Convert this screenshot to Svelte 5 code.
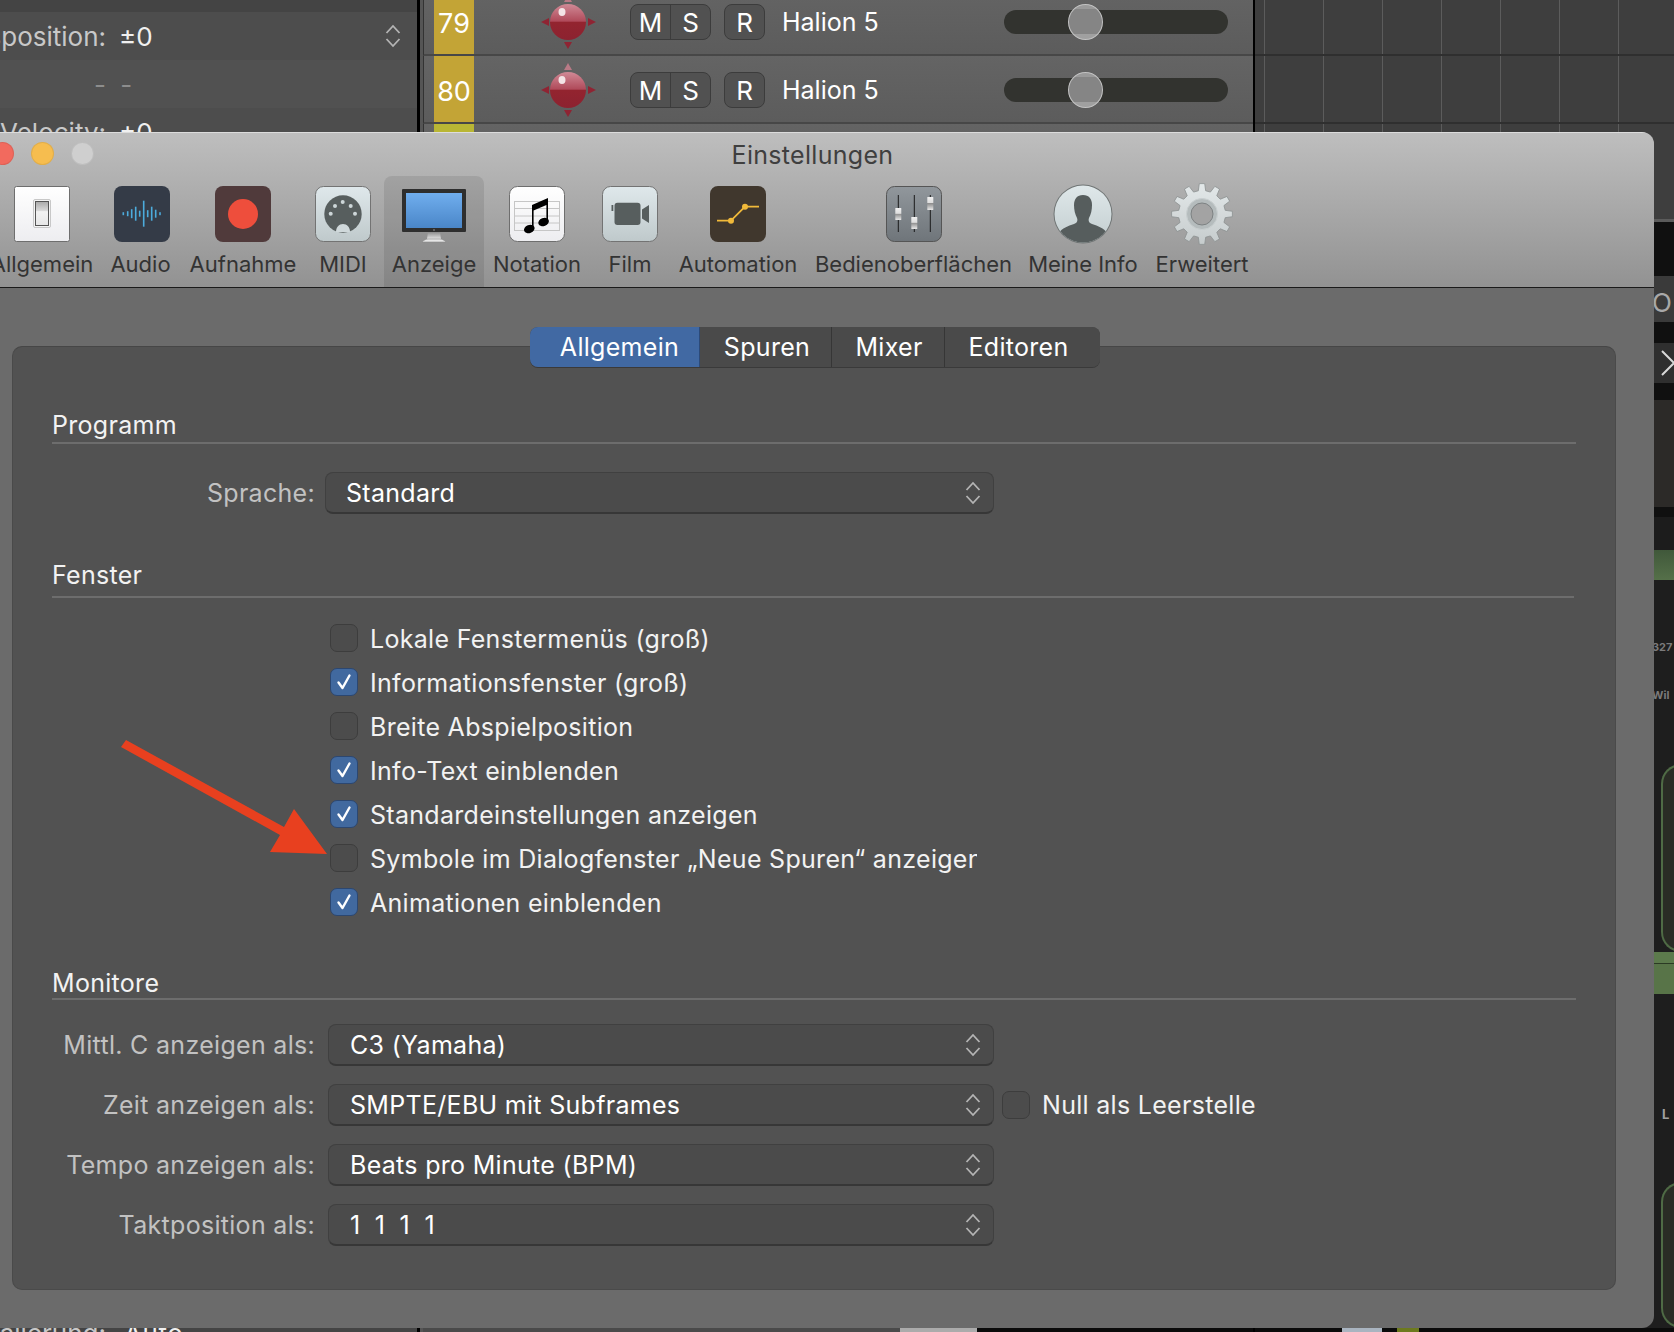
<script lang="ts">
  const tracks = [79, 80];
  const windowLines = [
    { text: "Lokale Fenstermenüs (groß)", on: false },
    { text: "Informationsfenster (groß)", on: true },
    { text: "Breite Abspielposition", on: false },
    { text: "Info-Text einblenden", on: true },
    { text: "Standardeinstellungen anzeigen", on: true },
    { text: "Symbole im Dialogfenster „Neue Spuren“ anzeigen", on: false },
    { text: "Animationen einblenden", on: true },
  ];
  const monitorRows = [
    { label: "Mittl. C anzeigen als:", value: "C3 (Yamaha)" },
    { label: "Zeit anzeigen als:", value: "SMPTE/EBU mit Subframes", extra: true },
    { label: "Tempo anzeigen als:", value: "Beats pro Minute (BPM)" },
    { label: "Taktposition als:", value: "1 1 1 1", spaced: true },
  ];

  // gear outline, 12 teeth
  function gearPath() {
    const pts: string[] = [];
    const n = 12;
    for (let i = 0; i < n; i++) {
      const a = (i / n) * Math.PI * 2 - Math.PI / 2;
      const step = (Math.PI * 2) / n;
      const add = (r: number, t: number) => {
        pts.push(`${(31 + r * Math.cos(a + t)).toFixed(2)},${(31 + r * Math.sin(a + t)).toFixed(2)}`);
      };
      add(23.5, -step * 0.3);
      add(30.5, -step * 0.17);
      add(30.5, step * 0.17);
      add(23.5, step * 0.3);
    }
    return "M" + pts.join("L") + "Z";
  }
  // x offset, height
  const audioBars = [
    [9.3, 3], [13.7, 5], [17.7, 9], [21.7, 14], [25.7, 6], [29.7, 26], [33.7, 7], [37.7, 14], [41.7, 8], [46, 3],
  ];
</script>

{#snippet chevrons()}
  <svg class="chevrons" width="16" height="24" viewBox="0 0 16 24" fill="none" stroke="#b4b4b4" stroke-width="1.8">
    <path d="M1.5 9 8 2l6.5 7M1.5 15 8 22l6.5-7" />
  </svg>
{/snippet}

{#snippet checkbox(on: boolean)}
  <span class="box" class:on>
    {#if on}
      <svg width="18" height="18" viewBox="0 0 18 18" fill="none" stroke="#fff" stroke-width="2.4" stroke-linecap="round" stroke-linejoin="round">
        <path d="M3.5 9.5 7.5 15 14.5 2.5" />
      </svg>
    {/if}
  </span>
{/snippet}

<div class="page">
  <div class="daw">
    <div class="inspector">
      <div class="irow stub"></div>
      <div class="irow dim">
        <span class="ilabel">Transposition:</span><span class="ivalue">±0</span>
        {@render chevrons()}
      </div>
      <div class="irow"><span class="ilabel"></span><span class="ivalue dashes">- -</span></div>
      <div class="irow dim"><span class="ilabel">Velocity:</span><span class="ivalue">±0</span></div>
      <div class="irow last"><span class="ilabel">Skalierung:</span><span class="ivalue auto">Auto</span></div>
    </div>

    <div class="tracks">
      {#each tracks as n}
        <div class="track">
          <div class="num"><span>{n}</span></div>
          <svg class="knob" width="60" height="60" viewBox="0 0 60 60">
            <defs>
              <linearGradient id="ball{n}" x1="0" y1="0" x2="0" y2="1">
                <stop offset="0" stop-color="#d08a96" />
                <stop offset="0.48" stop-color="#b04a5a" />
                <stop offset="0.5" stop-color="#93242f" />
                <stop offset="1" stop-color="#8c2230" />
              </linearGradient>
            </defs>
            <path d="M30 3l4 7h-8z" fill="#b97a86" />
            <path d="M30 57l-4-7h8z" fill="#8f2433" />
            <path d="M3 30l8-4v8z" fill="#8f2433" />
            <path d="M58 30l-8-4v8z" fill="#8f2433" />
            <circle cx="30" cy="30" r="18" fill="url(#ball{n})" />
            <ellipse cx="24" cy="20" rx="3.5" ry="4" fill="#f3e4e6" />
          </svg>
          <div class="ms"><span>M</span><span>S</span></div>
          <div class="rec">R</div>
          <div class="tname">Halion 5</div>
          <div class="fader"><span class="thumb"></span></div>
        </div>
      {/each}
      <div class="track next"><div class="num"></div></div>
      <div class="fill"></div>
      <div class="clips"><span class="c-gray"></span><span class="c-light"></span></div>
    </div>

    <div class="arrange">
      <div class="grid">
        <div class="gridrow first"></div>
        <div class="gridrow"></div>
      </div>
      <div class="lower">
        <div class="sp h54"></div>
        <div class="pill">O</div>
        <div class="sp h21"></div>
        <div class="chev">
          <svg width="20" height="40" viewBox="0 0 20 40" fill="none" stroke="#d8d8d8" stroke-width="2"><path d="M2 8l12 12L2 32" /></svg>
        </div>
        <div class="sp h17"></div>
        <div class="plug"></div>
        <div class="sp h10"></div>
        <div class="dk h33"></div>
        <div class="greenbar h30"></div>
        <div class="noise">
          <span class="n1">327</span>
          <span class="n2">Wil</span>
        </div>
        <div class="curve c1"></div>
        <div class="greenbar2"></div>
        <div class="noise2"><span class="n3">L</span></div>
        <div class="curve c2"></div>
      </div>
      <div class="clips right"><span class="c-ice"></span><span class="c-olive"></span></div>
    </div>
  </div>

  <div class="window">
    <header class="head">
      <div class="titlebar">
        <div class="lights">
          <span class="red"></span><span class="yellow"></span><span class="gray"></span>
        </div>
        <div class="title">Einstellungen</div>
      </div>
      <div class="toolbar">
        <div class="tool">
          <div class="ico">
            <svg width="56" height="56" viewBox="0 0 56 56">
              <defs>
                <linearGradient id="whiteg" x1="0" y1="0" x2="0" y2="1"><stop offset="0" stop-color="#fff" /><stop offset="1" stop-color="#ededf0" /></linearGradient>
                <linearGradient id="swg" x1="0" y1="0" x2="0" y2="1"><stop offset="0" stop-color="#a9a9a9" /><stop offset="0.4" stop-color="#dcdcdc" /><stop offset="0.42" stop-color="#f2f2f2" /><stop offset="1" stop-color="#e6e6e6" /></linearGradient>
              </defs>
              <rect x="0.5" y="0.5" width="55" height="55" rx="2" fill="url(#whiteg)" stroke="#6e6e6e" />
              <rect x="19.5" y="13.5" width="17" height="28" rx="1.5" fill="#f4f4f4" stroke="#c8c8c8" />
              <rect x="21.5" y="15.5" width="13" height="24" fill="url(#swg)" stroke="#555" />
            </svg>
          </div>
          <span>Allgemein</span>
        </div>
        <div class="tool">
          <div class="ico">
            <svg width="56" height="56" viewBox="0 0 56 56">
              <rect width="56" height="56" rx="8" fill="#343b47" />
              {#each audioBars as b}
                <rect x={b[0] - 0.8} y={27.7 - b[1] / 2} width="1.6" height={b[1]} fill="#4cabdc" />
              {/each}
            </svg>
          </div>
          <span class="nudge">Audio</span>
        </div>
        <div class="tool">
          <div class="ico">
            <svg width="56" height="56" viewBox="0 0 56 56">
              <rect width="56" height="56" rx="8" fill="#503a3b" />
              <circle cx="28" cy="28" r="15" fill="#ee4e3c" />
            </svg>
          </div>
          <span>Aufnahme</span>
        </div>
        <div class="tool">
          <div class="ico">
            <svg width="56" height="56" viewBox="0 0 56 56">
              <defs>
                <linearGradient id="iceg" x1="0" y1="0" x2="0" y2="1"><stop offset="0" stop-color="#dfe8eb" /><stop offset="1" stop-color="#bfc9cb" /></linearGradient>
              </defs>
              <rect x="0.5" y="0.5" width="55" height="55" rx="8" fill="url(#iceg)" stroke="#737373" />
              <circle cx="28" cy="28" r="18.7" fill="#575e5e" />
              <path d="M21 46c0-5 3-8 7-8s7 3 7 8z" fill="#cfd8da" />
              <g fill="#cdd6d8">
                <circle cx="15.7" cy="27.7" r="2" /><circle cx="20" cy="20" r="2" /><circle cx="27.7" cy="16" r="2" /><circle cx="35.7" cy="20" r="2" /><circle cx="40" cy="27.7" r="2" />
              </g>
            </svg>
          </div>
          <span>MIDI</span>
        </div>
        <div class="tool active">
          <div class="ico">
            <svg width="64" height="54" viewBox="0 0 64 54">
              <defs>
                <linearGradient id="screeng" x1="0" y1="0" x2="0" y2="1"><stop offset="0" stop-color="#70aeee" /><stop offset="1" stop-color="#4a86c8" /></linearGradient>
                <linearGradient id="standg" x1="0" y1="0" x2="0" y2="1"><stop offset="0" stop-color="#8c8c8c" /><stop offset="1" stop-color="#e4e4e4" /></linearGradient>
              </defs>
              <path d="M26 43h12l1 7H25z" fill="url(#standg)" />
              <path d="M20 53c2-2 4-3 6-3h12c2 0 4 1 6 3z" fill="#e6e6e6" stroke="#8a8a8a" stroke-width="0.6" />
              <rect width="64" height="43" rx="1" fill="#2e2e2e" />
              <rect x="4" y="4" width="56" height="35" fill="url(#screeng)" />
              <circle cx="32" cy="41" r="0.9" fill="#777" />
            </svg>
          </div>
          <span>Anzeige</span>
        </div>
        <div class="tool">
          <div class="ico">
            <svg width="56" height="56" viewBox="0 0 56 56">
              <rect x="0.5" y="0.5" width="55" height="55" rx="8" fill="url(#whiteg)" stroke="#6e6e6e" />
              <g stroke="#c6c6c6" fill="none">
                <rect x="5.5" y="15.5" width="45" height="29" />
                <path d="M5.5 22.5h45M5.5 30h45M5.5 37h45" />
              </g>
              <ellipse cx="20.3" cy="43" rx="5.5" ry="4" transform="rotate(-22 20.3 43)" fill="#000" />
              <ellipse cx="34.6" cy="36" rx="5.5" ry="4" transform="rotate(-22 34.6 36)" fill="#000" />
              <path d="M23 43V19L39 12v24h-1.6V19L24.6 24.5V43z" fill="#000" />
            </svg>
          </div>
          <span>Notation</span>
        </div>
        <div class="tool">
          <div class="ico">
            <svg width="56" height="56" viewBox="0 0 56 56">
              <rect x="0.5" y="0.5" width="55" height="55" rx="8" fill="url(#iceg)" stroke="#737373" />
              <rect x="12.5" y="16.7" width="26" height="22.3" rx="3" fill="#575e5e" />
              <path d="M40 23.5 47 19v18l-7-4.5z" fill="#575e5e" />
              <rect x="9.5" y="19" width="1.8" height="6" fill="#575e5e" />
            </svg>
          </div>
          <span>Film</span>
        </div>
        <div class="tool">
          <div class="ico">
            <svg width="56" height="56" viewBox="0 0 56 56">
              <rect width="56" height="56" rx="8" fill="#40372d" />
              <path d="M7 34.7h14L35 20.7h14" fill="none" stroke="#f0b93a" stroke-width="1.8" />
              <circle cx="21" cy="34.7" r="3" fill="#f0b93a" />
              <circle cx="35" cy="20.7" r="3" fill="#f0b93a" />
            </svg>
          </div>
          <span>Automation</span>
        </div>
        <div class="tool">
          <div class="ico">
            <svg width="56" height="56" viewBox="0 0 56 56">
              <defs>
                <linearGradient id="steelg" x1="0" y1="0" x2="0" y2="1"><stop offset="0" stop-color="#91979c" /><stop offset="1" stop-color="#6f757a" /></linearGradient>
                <linearGradient id="capg" x1="0" y1="0" x2="0" y2="1"><stop offset="0" stop-color="#f0f0f0" /><stop offset="0.45" stop-color="#ddd" /><stop offset="0.5" stop-color="#8f8f8f" /><stop offset="1" stop-color="#e8e8e8" /></linearGradient>
              </defs>
              <rect x="0.5" y="0.5" width="55" height="55" rx="8" fill="url(#steelg)" stroke="#555" />
              <path d="M12.3 9v37M28.3 9v37M44.3 9v37" stroke="#1a1a1a" stroke-width="1" />
              <rect x="9.3" y="22" width="6" height="12" rx="0.6" fill="url(#capg)" />
              <rect x="25.3" y="31" width="6" height="12" rx="0.6" fill="url(#capg)" />
              <rect x="41.3" y="11" width="6" height="13" rx="0.6" fill="url(#capg)" />
            </svg>
          </div>
          <span>Bedienoberflächen</span>
        </div>
        <div class="tool">
          <div class="ico">
            <svg width="60" height="60" viewBox="0 0 60 60">
              <defs>
                <clipPath id="avclip"><circle cx="30" cy="30" r="28.5" /></clipPath>
                <linearGradient id="avg" x1="0" y1="0" x2="0" y2="1"><stop offset="0" stop-color="#dfe8ea" /><stop offset="1" stop-color="#c2cdcf" /></linearGradient>
              </defs>
              <circle cx="30" cy="30" r="29.5" fill="#6f7474" />
              <circle cx="30" cy="30" r="28.5" fill="url(#avg)" />
              <path clip-path="url(#avclip)" d="M30 11c6 0 9 4 9 10 0 5-1 9-3 13-1 3 0 5 3 6 6 2 12 4 15 9v11H6V49c3-5 9-7 15-9 3-1 4-3 3-6-2-4-3-8-3-13 0-6 3-10 9-10z" fill="#565d5d" />
            </svg>
          </div>
          <span>Meine Info</span>
        </div>
        <div class="tool">
          <div class="ico">
            <svg width="62" height="62" viewBox="0 0 62 62">
              <defs>
                <linearGradient id="gearg" x1="0" y1="0" x2="0" y2="1"><stop offset="0" stop-color="#e3e8e9" /><stop offset="1" stop-color="#c6cccd" /></linearGradient>
              </defs>
              <path d={gearPath()} fill="url(#gearg)" stroke="#8c9090" stroke-width="0.8" stroke-linejoin="round" />
              <circle cx="31" cy="31" r="15.5" fill="#b5bcbd" stroke="#c9cfd0" />
              <circle cx="31" cy="31" r="11" fill="#a3a3a3" stroke="#7d8283" stroke-width="1" />
            </svg>
          </div>
          <span>Erweitert</span>
        </div>
      </div>
    </header>

    <div class="panel">
      <div class="tabs">
        <button class="tab t1 selected">Allgemein</button>
        <button class="tab t2">Spuren</button>
        <button class="tab t3">Mixer</button>
        <button class="tab t4">Editoren</button>
      </div>

      <section>
        <h3 class="sec s-prog">Programm</h3>
        <div class="formrow lang">
          <span class="flabel">Sprache:</span>
          <div class="select wide"><span>Standard</span>{@render chevrons()}</div>
        </div>

        <h3 class="sec s-win">Fenster</h3>
        <div class="checks">
          {#each windowLines as line}
            <div class="check">
              {@render checkbox(line.on)}
              <span class="clabel">{line.text}</span>
            </div>
          {/each}
        </div>

        <h3 class="sec s-mon">Monitore</h3>
        <div class="monitors">
          {#each monitorRows as row}
            <div class="formrow">
              <span class="flabel">{row.label}</span>
              <div class="select"><span class:spaced={row.spaced}>{row.value}</span>{@render chevrons()}</div>
              {#if row.extra}
                <div class="check inline">
                  {@render checkbox(false)}
                  <span class="clabel">Null als Leerstelle</span>
                </div>
              {/if}
            </div>
          {/each}
        </div>
      </section>
    </div>
  </div>

  <svg class="arrow" width="340" height="880" viewBox="0 0 340 880">
    <polygon points="121,747 126,740 284,827 294,809 327,854 270,852 280,835" fill="#e8401f" />
  </svg>
</div>

<style>
  :global(body) {
    margin: 0;
    background: #000;
  }

  .page {
    position: relative;
    width: 1674px;
    height: 1332px;
    overflow: hidden;
    font-family: Inter, "Noto Sans", sans-serif;
    color: #fff;
  }

  /* ---- DAW behind the window ---- */
  .daw {
    display: flex;
    height: 100%;
  }

  .inspector {
    display: flex;
    flex-direction: column;
    width: 417px;
    flex-shrink: 0;
    background: #515151;
    box-sizing: border-box;
  }

  .irow {
    display: flex;
    align-items: center;
    height: 48px;
    font-size: 26px;
    flex-shrink: 0;
  }
  .irow.stub {
    height: 12px;
    background: #444;
  }
  .irow.dim {
    background: #4d4d4d;
  }
  .irow.last {
    height: 4px;
    margin-top: auto;
    overflow: hidden;
    background: #444;
    align-items: flex-start;
  }
  .irow.last span {
    margin-top: -9px;
    line-height: 30px;
  }
  .ilabel {
    display: flex;
    justify-content: flex-end;
    flex-shrink: 0;
    width: 106px;
    color: #c8c8c8;
    white-space: nowrap;
  }
  .ivalue {
    margin-left: 13px;
    color: #f0f0f0;
  }
  .ivalue.auto {
    margin-left: 18px;
    letter-spacing: 0.6px;
  }
  .ivalue.dashes {
    margin-left: -12px;
    color: #8d8d8d;
    letter-spacing: 3.5px;
  }
  .irow .chevrons {
    margin-left: auto;
    margin-right: 16px;
  }

  .tracks {
    display: flex;
    flex-direction: column;
    width: 838px;
    flex-shrink: 0;
    box-sizing: border-box;
    background: #555;
    border-left: 3px solid #000;
    border-right: 2px solid #000;
    padding-left: 3px;
  }

  .track {
    display: flex;
    align-items: center;
    flex-shrink: 0;
    height: 68px;
    box-sizing: border-box;
    border-bottom: 2px solid #474747;
    background: linear-gradient(#646464, #5c5c5c);
    border-left: 1px solid #333;
    padding-left: 10px;
  }
  .track:first-child {
    margin-top: -12px;
  }
  .track.next {
    height: 40px;
    border-bottom: none;
  }
  .num {
    display: flex;
    align-items: center;
    justify-content: center;
    width: 40px;
    height: 100%;
    background: #c3a436;
    font-size: 27px;
  }
  .num span {
    margin-top: 5px;
  }
  .track.next .num {
    background: #b9b634;
  }
  .knob {
    margin-left: 64px;
    margin-top: 2px;
    flex-shrink: 0;
  }
  .ms,
  .rec,
  .tname,
  .fader {
    margin-top: 2px;
  }
  .ms,
  .rec {
    display: flex;
    box-sizing: border-box;
    height: 36px;
    border: 1px solid #3c3c3c;
    border-radius: 8px;
    background: #515151;
    font-size: 26px;
  }
  .ms {
    width: 81px;
    margin-left: 32px;
  }
  .ms span {
    display: flex;
    align-items: center;
    justify-content: center;
    flex: 1;
  }
  .ms span + span {
    border-left: 1px solid #3c3c3c;
  }
  .rec {
    align-items: center;
    justify-content: center;
    width: 41px;
    margin-left: 13px;
  }
  .tname {
    width: 222px;
    margin-left: 17px;
    font-size: 25px;
    white-space: nowrap;
  }
  .fader {
    display: flex;
    align-items: center;
    width: 224px;
    height: 24px;
    border-radius: 12px;
    background: #32332f;
  }
  .thumb {
    display: block;
    box-sizing: border-box;
    width: 35px;
    height: 36px;
    margin-left: 64px;
    border-radius: 50%;
    border: 1px solid #c4c4c4;
    background: linear-gradient(#9a9a9a 0 12%, #858585 12% 85%, #a0a0a0 85%);
  }
  .fill {
    flex: 1;
    background: #555;
  }

  .clips {
    display: flex;
    flex-shrink: 0;
    height: 4px;
    background: #0b0b0b;
  }
  .c-gray {
    width: 477px;
    background: #4a4a4a;
  }
  .c-light {
    width: 77px;
    background: #ababab;
  }
  .clips.right {
    padding-left: 87px;
  }
  .c-ice {
    width: 40px;
    background: #a9b4c0;
  }
  .c-olive {
    width: 22px;
    margin-left: 15px;
    background: #6d7a1e;
  }

  .arrange {
    display: flex;
    flex-direction: column;
    flex: 1;
    min-width: 0;
    background: #111;
  }

  .grid {
    flex-shrink: 0;
    height: 219px;
    border-bottom: 3px solid #5b5b5b;
    background: repeating-linear-gradient(90deg, #3e3e3e 0 9px, #5c5c5c 9px 10px, #3e3e3e 10px 59px);
  }
  .gridrow {
    height: 66px;
    border-bottom: 2px solid #2f2f2f;
  }
  .gridrow.first {
    height: 54px;
  }

  .lower {
    display: flex;
    flex-direction: column;
    flex: 1;
    min-height: 0;
    padding-left: 397px;
    background: #101010;
  }
  .sp {
    flex-shrink: 0;
  }
  .h54 { height: 54px; }
  .h21 { height: 21px; }
  .h17 { height: 17px; }
  .h10 { height: 10px; }
  .pill {
    height: 46px;
    flex-shrink: 0;
    overflow: hidden;
    background: #3a3a3a;
    color: #a8a8a8;
    font-size: 26px;
    line-height: 54px;
    white-space: nowrap;
  }
  .chev {
    display: flex;
    height: 40px;
    flex-shrink: 0;
    padding-left: 8px;
    background: #2f2f2f;
  }
  .chev svg {
    flex-shrink: 0;
  }
  .plug {
    height: 107px;
    flex-shrink: 0;
    box-sizing: border-box;
    border-left: 2px solid #54694c;
    background: #2c2a28;
  }
  .dk {
    flex-shrink: 0;
    background: #1c1c1c;
  }
  .h33 { height: 33px; }
  .greenbar {
    flex-shrink: 0;
    background: linear-gradient(#40583a, #557049);
  }
  .h30 { height: 30px; }
  .noise {
    display: flex;
    flex-direction: column;
    flex-shrink: 0;
    height: 184px;
    background: #1e1e1e;
    color: #7b7b7b;
    font-size: 11px;
    font-weight: 700;
    line-height: 12px;
    white-space: nowrap;
  }
  .n1 { margin-top: 61px; }
  .n2 { margin-top: 36px; }
  .curve {
    flex-shrink: 0;
    box-sizing: border-box;
    margin-left: -20px;
    padding-left: 30px;
    background: #1e1e1e;
    position: relative;
  }
  .curve::after {
    content: "";
    position: absolute;
    left: 29px;
    top: 0;
    bottom: 0;
    width: 20px;
    box-sizing: border-box;
    border: 2px solid #4f6b45;
    border-right: none;
    border-radius: 20px 0 0 20px;
    background: #2a2c25;
  }
  .c1 { height: 188px; }
  .c2 { height: 146px; }
  .greenbar2 {
    height: 42px;
    flex-shrink: 0;
    border-top: 11px solid #5c7a4c;
    box-sizing: border-box;
    background: #587448;
    box-shadow: inset 0 1px 0 #2b3a24;
  }
  .noise2 {
    height: 188px;
    flex-shrink: 0;
    background: #1e1e1e;
    color: #a0a0a0;
    font-size: 13px;
    font-weight: 700;
    padding: 112px 0 0 10px;
    box-sizing: border-box;
  }

  /* ---- preferences window ---- */
  .window {
    position: absolute;
    left: -29px;
    top: 132px;
    display: flex;
    flex-direction: column;
    width: 1683px;
    height: 1196px;
    overflow: hidden;
    border-radius: 12px;
    background: #6b6b6b;
  }

  .head {
    flex-shrink: 0;
    height: 156px;
    box-sizing: border-box;
    background: linear-gradient(#bebebe, #929292);
    border-top: 1px solid #dcdcdc;
    border-bottom: 1px solid #1a1a1a;
  }

  .titlebar {
    position: relative;
    display: flex;
    align-items: center;
    justify-content: center;
    height: 43px;
  }
  .title {
    font-size: 25px;
    letter-spacing: 0.3px;
    color: #3f3f3f;
  }
  .lights {
    position: absolute;
    left: 20px;
    top: 9px;
    display: flex;
    gap: 17px;
  }
  .lights span {
    width: 23px;
    height: 23px;
    box-sizing: border-box;
    border-radius: 50%;
    border: 1px solid rgba(0, 0, 0, 0.08);
  }
  .red { background: #f26a5e; }
  .yellow { background: #f6bd4f; }
  .gray { background: #cfcfcf; }

  .toolbar {
    display: grid;
    grid-template-columns: 116px 84px 118px 82px 100px 106px 80px 136px 215px 124px 114px;
    height: 111px;
    margin-left: 13px;
  }
  .tool {
    display: flex;
    flex-direction: column;
    align-items: center;
    min-width: 0;
    padding-top: 10px;
    box-sizing: border-box;
    border-radius: 8px 8px 0 0;
    font-size: 22px;
    color: #333;
    white-space: nowrap;
  }
  .tool.active {
    background: rgba(0, 0, 0, 0.09);
  }
  .ico {
    display: flex;
    align-items: center;
    justify-content: center;
    height: 56px;
    flex-shrink: 0;
  }
  .ico svg {
    flex-shrink: 0;
  }
  .tool.active .ico svg {
    margin-top: 3px;
  }
  .tool > span {
    margin-top: 9px;
    line-height: 27px;
  }
  .tool > span.nudge {
    margin-right: 3px;
  }

  .panel {
    flex-shrink: 0;
    box-sizing: border-box;
    height: 944px;
    margin: 58px 38px 0 41px;
    padding: 0 39px;
    border: 1px solid #4a4a4a;
    border-top-color: #464646;
    border-radius: 10px;
    background: #525252;
  }

  .tabs {
    display: flex;
    width: 570px;
    height: 40px;
    margin: -20px 0 0 478px;
    box-sizing: border-box;
    border-radius: 8px;
    box-shadow: 0 1px 0 #3a3a3a;
    background: #4a4a4a;
  }
  .tab {
    padding: 0;
    border: none;
    border-right: 1px solid #363636;
    background: #4a4a4a;
    color: #fff;
    font: inherit;
    font-size: 25px;
    letter-spacing: 0.3px;
  }
  .t1 { width: 170px; border-radius: 8px 0 0 8px; padding-left: 10px; }
  .t2 { width: 132px; padding-left: 3px; }
  .t3 { width: 113px; padding-left: 2px; }
  .t4 { width: 155px; border-right: none; border-radius: 0 8px 8px 0; padding-right: 8px; }
  .tab.selected {
    background: #4169a3;
    border-right-color: #2c4a78;
  }

  .sec {
    margin: 0;
    height: 30px;
    line-height: 30px;
    font-size: 25px;
    font-weight: 400;
    letter-spacing: 0.3px;
    color: #f2f2f2;
    box-sizing: content-box;
    border-bottom: 2px solid #6d6d6d;
  }
  .s-prog { margin-top: 43px; padding-bottom: 2px; }
  .s-win { margin-top: 46px; margin-right: 2px; padding-bottom: 6px; }
  .s-mon { margin-top: 52px; padding-bottom: 0; }

  .formrow {
    display: flex;
    align-items: center;
    height: 42px;
  }
  .formrow.lang {
    margin-top: 28px;
  }
  .flabel {
    width: 263px;
    flex-shrink: 0;
    padding-bottom: 1px;
    text-align: right;
    font-size: 25px;
    letter-spacing: 0.3px;
    color: #c2c2c2;
    white-space: nowrap;
  }
  .select {
    display: flex;
    align-items: center;
    justify-content: space-between;
    box-sizing: border-box;
    width: 666px;
    height: 42px;
    margin-left: 13px;
    padding: 0 12px 0 21px;
    border: 1px solid #404040;
    border-bottom: 2px solid #373737;
    border-radius: 8px;
    background: #4b4b4b;
    font-size: 25px;
    letter-spacing: 0.3px;
    color: #fff;
  }
  .select.wide {
    width: 669px;
    margin-left: 10px;
    padding-left: 20px;
  }
  .spaced {
    word-spacing: 7px;
  }

  .checks {
    display: flex;
    flex-direction: column;
    gap: 16px;
    margin-top: 26px;
    padding-left: 278px;
  }
  .check {
    display: flex;
    align-items: center;
    gap: 12px;
    height: 28px;
    font-size: 25px;
    letter-spacing: 0.3px;
  }
  .check.inline {
    margin-left: 8px;
  }
  .clabel {
    max-width: 607px;
    overflow: hidden;
    white-space: nowrap;
    color: #f2f2f2;
    line-height: 32px;
    padding-top: 1px;
  }
  .check.inline .clabel {
    padding-top: 0;
  }
  .box {
    display: flex;
    align-items: center;
    justify-content: center;
    width: 28px;
    height: 28px;
    box-sizing: border-box;
    flex-shrink: 0;
    border: 1px solid #3d3d3d;
    border-radius: 7px;
    background: #4c4c4c;
  }
  .box.on {
    background: #41699f;
    border-color: #2c4770;
  }

  .monitors {
    display: flex;
    flex-direction: column;
    gap: 18px;
    margin-top: 24px;
  }

  .arrow {
    position: absolute;
    left: 0;
    top: 0;
    pointer-events: none;
  }
</style>
